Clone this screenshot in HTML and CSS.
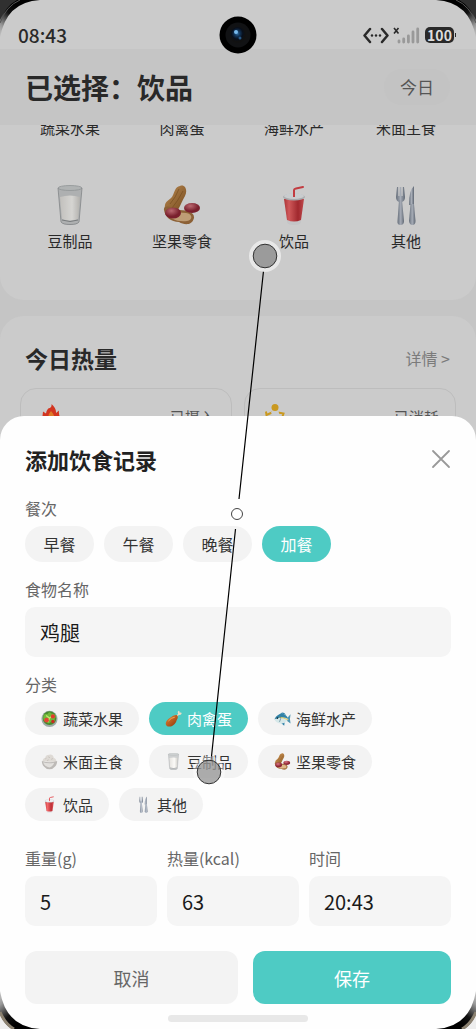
FILE: index.html
```html
<!DOCTYPE html>
<html lang="zh-CN">
<head>
    <meta charset="UTF-8">
    <meta name="viewport" content="width=device-width, initial-scale=1.0">
    <title>饮食记录</title>
    <link rel="stylesheet" href="styles.css">
</head>
<body>
    <!-- food icons -->
    <svg class="defs" width="0" height="0" aria-hidden="true">
        <defs>
            <linearGradient id="gMilk" x1="0" x2="1" y2="0"><stop offset="0" stop-color="#e4e2de"/><stop offset=".6" stop-color="#fbfaf7"/><stop offset="1" stop-color="#d3d1cc"/></linearGradient>
            <linearGradient id="gCup" x1="0" x2="1" y2="0"><stop offset="0" stop-color="#c93d40"/><stop offset=".25" stop-color="#f4686a"/><stop offset=".7" stop-color="#bd3036"/><stop offset="1" stop-color="#e2565a"/></linearGradient>
            <linearGradient id="gShell" x1="0" x2="1" y2="1"><stop offset="0" stop-color="#d9a261"/><stop offset="1" stop-color="#8b5722"/></linearGradient>
            <linearGradient id="gSteel" x1="0" x2="1" y2="0"><stop offset="0" stop-color="#76808e"/><stop offset=".5" stop-color="#c3cad6"/><stop offset="1" stop-color="#6f7987"/></linearGradient>
            <radialGradient id="gNut" cx=".4" cy=".3"><stop offset="0" stop-color="#dc7b84"/><stop offset="1" stop-color="#8f2635"/></radialGradient>
            <linearGradient id="gLeg" x1="0" x2="1" y2="1"><stop offset="0" stop-color="#e98a3a"/><stop offset="1" stop-color="#8a3208"/></linearGradient>
            <radialGradient id="gLens" cx=".45" cy=".4"><stop offset="0" stop-color="#2f70a8"/><stop offset=".35" stop-color="#123458"/><stop offset=".7" stop-color="#080f1c"/><stop offset="1" stop-color="#111"/></radialGradient>
        </defs>
        <symbol id="milk" viewBox="0 0 40 40">
            <path d="M8 3L11 37Q12 40 20 40T29 37L32 3Z" fill="#c4c7c8" opacity=".8"/>
            <path d="M10 12Q20 9 30 12L28 34Q20 37 12 34Z" fill="url(#gMilk)"/>
            <ellipse cx="20" cy="3" rx="12" ry="2.500" fill="#cfd2d3" stroke="#aaaeb0" stroke-width=".8"/>
            <path d="M8 3L11 37Q13 39.500 20 39.500T29 37L32 3" fill="none" stroke="#999d9f" stroke-width=".8"/>
            <path d="M12 35Q20 38 28 35" fill="none" stroke="#8c9092"/>
        </symbol>
        <symbol id="nuts" viewBox="0 0 40 40">
            <path d="M18 1C23-1 26 5 23 11C20 16 19 19 17 23C13 30 1 28 3 20C4 15 9 15 11 10C13 6 13 2 18 1Z" fill="url(#gShell)"/>
            <path d="M17 4Q14 12 8 19M21 6Q16 16 10 23" fill="none" stroke="#855520" stroke-width=".6"/>
            <path d="M2 25C1 20 9 21 15 25C22 25 33 26 32 33C30 41 22 40 17 37C9 37 3 32 2 25Z" fill="#a57240"/>
            <path d="M5 28C11 26 18 28 24 28C31 29 31 35 25 36C15 37 8 34 5 28Z" fill="#e0b98a"/>
            <ellipse cx="11" cy="28" rx="8" ry="5.500" fill="url(#gNut)"/>
            <ellipse cx="30" cy="23" rx="8" ry="5" fill="url(#gNut)"/>
        </symbol>
        <symbol id="drink" viewBox="0 0 40 40">
            <path d="M20 11V5Q20 4 22 3.500L29 2" fill="none" stroke="#e4474c" stroke-width="2" stroke-linecap="round"/>
            <path d="M10 13L13 37Q13 40 20 40T27 37L30 13Z" fill="#e6e8ea"/>
            <path d="M10 14L13 35Q20 38 27 35L30 14Z" fill="url(#gCup)"/>
            <ellipse cx="20" cy="12" rx="11" ry="3.500" fill="#c5c8cb"/>
            <ellipse cx="20" cy="11" rx="10" ry="3" fill="#edf0f2"/>
            <path d="M20 12V7" stroke="#e4474c" stroke-width="2"/>
        </symbol>
        <symbol id="cutlery" viewBox="0 0 40 40">
            <path d="M11 2L10 12Q10 16 13 17H16Q19 16 19 12L18 2H16.800L16.600 11H15.500L15.200 2H13.800L13.500 11H12.400L12.200 2Z" fill="url(#gSteel)"/>
            <path d="M13 15H16L18 36Q18 40 14.500 40T11.500 36Z" fill="url(#gSteel)"/>
            <path d="M28 1Q23 5 23 20H28Z" fill="url(#gSteel)"/>
            <path d="M24.500 19H28L29.500 36Q29.500 40 26.500 40T23 36Z" fill="url(#gSteel)"/>
        </symbol>
        <symbol id="salad" viewBox="0 0 40 40">
            <circle cx="20" cy="21" r="19" fill="#9eaaa7"/>
            <circle cx="20" cy="19" r="16" fill="#478b2d"/>
            <path d="M5 16Q8 6 15 10Q20 1 25 9Q34 7 35 17Q30 20 33 26Q27 31 23 28Q17 35 13 27Q5 28 5 16Z" fill="#70b83b"/>
            <path d="M12 13L20 19L29 12M20 19L16 29" fill="none" stroke="#c2e46f" stroke-width="3"/>
            <circle cx="28" cy="15" r="5" fill="#df3b2d"/><circle cx="13" cy="24" r="5.500" fill="#e44434"/><circle cx="28" cy="27" r="4" fill="#c92d23"/>
        </symbol>
        <symbol id="meat" viewBox="0 0 40 40">
            <path d="M23 17L31 9Q28 4 32 2Q35 2 34 6Q40 5 39 9Q37 13 33 11L26 19Z" fill="#ecdcc4"/>
            <path d="M28 12C33 17 28 22 26 28C21 38 11 41 5 38C-2 33 3 23 12 18Q21 10 28 12Z" fill="url(#gLeg)"/>
            <path d="M8 26Q14 18 23 17" fill="none" stroke="#f3b261" stroke-width="2"/>
        </symbol>
        <symbol id="fish" viewBox="0 0 40 40">
            <path d="M13 11Q20 1 28 11ZM16 30L24 37L25 29Z" fill="#2d80a7"/>
            <path d="M30 20L39 10Q36 21 39 32L30 25Z" fill="#4f96b2"/>
            <path d="M1 22Q8 8 21 9Q29 11 34 22Q26 33 15 32Q5 31 1 22Z" fill="#d6e8e9"/>
            <path d="M1 22Q8 8 21 9Q29 11 34 21Q19 14 1 22Z" fill="#3182a7"/>
            <path d="M13 17Q23 18 33 23" fill="none" stroke="#e5c649" stroke-width="2"/>
            <path d="M14 13Q18 20 13 28" fill="none" stroke="#4c7889" stroke-width="1.500"/>
            <circle cx="8" cy="19" r="2" fill="#142f3b"/>
        </symbol>
        <symbol id="rice" viewBox="0 0 40 40">
            <path d="M4 20Q3 13 10 11Q11 4 19 4Q28 2 30 11Q37 14 36 21Z" fill="#dedad5"/>
            <path d="M10 14L13 12M17 9L21 11M24 15L28 13M14 18L18 16" stroke="#bbb5ae" stroke-width="1.500"/>
            <path d="M2 19Q20 25 38 19Q38 30 29 35Q28 38 20 38T11 35Q2 30 2 19Z" fill="#bdbab7"/>
            <path d="M5 22Q17 26 31 23Q29 31 20 34Q8 32 5 22Z" fill="#e2e0dd"/>
        </symbol>
        <symbol id="fire" viewBox="0 0 40 40">
            <path d="M21 0Q31 9 30 18L36 13Q35 20 38 26Q40 40 20 40Q1 39 3 24L4 15L10 19Q12 8 18 8Q22 5 21 0Z" fill="#e93b24"/>
            <path d="M20 14Q27 22 27 28Q29 39 20 39Q9 39 11 27L14 28Q14 20 20 14Z" fill="#f5892c"/>
        </symbol>
        <symbol id="runner" viewBox="0 0 40 40">
            <path d="M14 17L3 22L2 15M26 17L37 19L34 28M22 30L29 39M20 30L10 37" fill="none" stroke="#e0aa24" stroke-width="4"/>
            <path d="M12 16L27 14L30 28L18 33Z" fill="#e2e5e8"/>
            <circle cx="20" cy="7" r="7" fill="#e0aa24"/>
        </symbol>
    </svg>

    <div class="screen">
        <div class="status-bar">
            <span class="clock">08:43</span>
            <svg class="camera" viewBox="0 0 38 38">
                <circle cx="19" cy="19" r="18.500" fill="#000"/>
                <circle cx="19" cy="19" r="12.500" fill="#111214"/>
                <circle cx="19" cy="19" r="8" fill="url(#gLens)"/>
                <circle cx="17" cy="16" r="2" fill="#78b9eb"/>
                <circle cx="21" cy="22" r="1.500" fill="#275887"/>
            </svg>
            <div class="status-icons">
                <svg width="58" height="18" viewBox="0 0 58 18">
                    <path d="M7 3L1.500 9.500L7 16M19 3L24.500 9.500L19 16" fill="none" stroke="#292929" stroke-width="2.500" stroke-linejoin="round" stroke-linecap="round"/>
                    <circle cx="9" cy="9.500" r="1.200" fill="#292929"/><circle cx="13" cy="9.500" r="1.200" fill="#292929"/><circle cx="17" cy="9.500" r="1.200" fill="#292929"/>
                    <path d="M31 2L35.500 7.500M35.500 2L31 7.500" stroke="#292929" stroke-width="1.600"/>
                    <path d="M36 15V16M40.700 13V16M45.400 10V16M50 6V16M54.700 3V16" stroke="#999" stroke-width="2.800" stroke-linecap="round"/>
                </svg>
                <span class="battery">100</span>
            </div>
        </div>

        <header class="header">
            <h1>已选择：饮品</h1>
            <button type="button" class="today">今日</button>
        </header>

        <section class="foods">
            <div class="food-row food-row-first">
                <span>蔬菜水果</span>
                <span>肉禽蛋</span>
                <span>海鲜水产</span>
                <span>米面主食</span>
            </div>
            <div class="food-row">
                <div class="food"><svg><use href="#milk"/></svg><span>豆制品</span></div>
                <div class="food"><svg><use href="#nuts"/></svg><span>坚果零食</span></div>
                <div class="food"><svg><use href="#drink"/></svg><span>饮品</span></div>
                <div class="food"><svg><use href="#cutlery"/></svg><span>其他</span></div>
            </div>
        </section>

        <section class="calories">
            <div class="calories-head">
                <h2>今日热量</h2>
                <a href="#">详情 &gt;</a>
            </div>
            <div class="cards">
                <div class="card"><svg><use href="#fire"/></svg><span>已摄入</span></div>
                <div class="card"><svg><use href="#runner"/></svg><span>已消耗</span></div>
            </div>
        </section>

        <form class="sheet">
            <div class="sheet-head">
                <h2>添加饮食记录</h2>
                <button type="button" class="close" aria-label="关闭">
                    <svg width="20" height="20" viewBox="0 0 20 20"><path d="M2 2L18 18M18 2L2 18" stroke="#999" stroke-width="1.800" stroke-linecap="round"/></svg>
                </button>
            </div>

            <div class="field">
                <span class="label">餐次</span>
                <div class="chips">
                    <button type="button" class="chip">早餐</button>
                    <button type="button" class="chip">午餐</button>
                    <button type="button" class="chip">晚餐</button>
                    <button type="button" class="chip active">加餐</button>
                </div>
            </div>

            <div class="field">
                <label class="label" for="name">食物名称</label>
                <input type="text" id="name" name="name" value="鸡腿">
            </div>

            <div class="field">
                <span class="label">分类</span>
                <div class="chips">
                    <button type="button" class="chip small"><svg><use href="#salad"/></svg>蔬菜水果</button>
                    <button type="button" class="chip small active"><svg><use href="#meat"/></svg>肉禽蛋</button>
                    <button type="button" class="chip small"><svg><use href="#fish"/></svg>海鲜水产</button>
                    <button type="button" class="chip small"><svg><use href="#rice"/></svg>米面主食</button>
                    <button type="button" class="chip small"><svg><use href="#milk"/></svg>豆制品</button>
                    <button type="button" class="chip small"><svg><use href="#nuts"/></svg>坚果零食</button>
                    <button type="button" class="chip small"><svg><use href="#drink"/></svg>饮品</button>
                    <button type="button" class="chip small"><svg><use href="#cutlery"/></svg>其他</button>
                </div>
            </div>

            <div class="numbers">
                <div>
                    <label class="label" for="weight">重量(g)</label>
                    <input type="text" id="weight" name="weight" inputmode="numeric" value="5">
                </div>
                <div>
                    <label class="label" for="kcal">热量(kcal)</label>
                    <input type="text" id="kcal" name="kcal" inputmode="numeric" value="63">
                </div>
                <div>
                    <label class="label" for="time">时间</label>
                    <input type="text" id="time" name="time" value="20:43">
                </div>
            </div>

            <div class="actions">
                <button type="button" class="cancel">取消</button>
                <button type="submit" class="save">保存</button>
            </div>
            <div class="home-bar"></div>
        </form>

        <!-- swipe trace -->
        <svg class="trace" width="476" height="1029" viewBox="0 0 476 1029" aria-hidden="true">
            <path d="M263.500 271L239 499M235.500 529L211 761" stroke="#000" stroke-width="1.200"/>
            <circle cx="265" cy="256" r="14" fill="none" stroke="#e8e8e8" stroke-width="4"/>
            <circle cx="265" cy="256" r="11.800" fill="#9b9b9b" stroke="#333"/>
            <circle cx="237" cy="514" r="5.500" fill="#fff" stroke="#444"/>
            <circle cx="209" cy="772" r="14" fill="none" stroke="#fff" stroke-width="4" opacity=".4"/>
            <circle cx="209" cy="772" r="11.800" fill="#999" fill-opacity=".8" stroke="#333"/>
        </svg>
    </div>

    <!-- phone frame corners -->
    <svg class="corner top-left" viewBox="0 0 40 40"><use href="#cornerTop"/></svg>
    <svg class="corner top-right" viewBox="0 0 40 40"><use href="#cornerTop"/></svg>
    <svg class="corner bottom-left" viewBox="0 0 40 40"><use href="#cornerBottom"/></svg>
    <svg class="corner bottom-right" viewBox="0 0 40 40"><use href="#cornerBottom"/></svg>
    <svg class="defs" width="0" height="0" aria-hidden="true">
        <defs>
            <linearGradient id="gEdge" x1="0" y1="1" x2=".6" y2=".3"><stop offset="0" stop-color="#cbcbcb"/><stop offset=".3" stop-color="#999"/><stop offset=".7" stop-color="#111"/><stop offset="1" stop-color="#000"/></linearGradient>
        </defs>
        <symbol id="cornerTop" viewBox="0 0 40 40">
            <path d="M0 0H40Q6 2 0 38Z" fill="url(#gEdge)"/>
            <path d="M0 0H17Q6 6 0 20Z" fill="#303030"/>
            <path d="M20 0Q6 6 0 23" fill="none" stroke="#555"/>
        </symbol>
        <symbol id="cornerBottom" viewBox="0 0 40 40">
            <path d="M0 0H40Q6 2 0 38Z" fill="url(#gEdge)"/>
            <path d="M0 0H12Q4 5 0 15Z" fill="#eee"/>
            <path d="M14 0Q5 5 0 17" fill="none" stroke="#8c8271" stroke-width="3"/>
        </symbol>
    </svg>
</body>
</html>
```

FILE: styles.css
```css
* {
    box-sizing: border-box;
}
body {
    margin: 0;
    font-family: "Noto Sans CJK SC", sans-serif;
    color: #222;
    position: relative;
}
h1, h2 {
    margin: 0;
}
button, input {
    font-family: inherit;
    border: none;
}
.defs {
    position: absolute;
}
.screen {
    position: relative;
    display: flex;
    flex-direction: column;
    min-height: 100vh;
    overflow: hidden;
    background-color: #c5c5c5;
}

/* status bar */
.status-bar {
    position: relative;
    display: flex;
    justify-content: space-between;
    align-items: center;
    height: 49px;
    padding: 20px 20px 0 18px;
    background-color: #cbcbcb;
}
.clock {
    font-size: 19px;
    font-weight: 500;
    line-height: 28px;
    color: #292929;
}
.camera {
    position: absolute;
    top: 16px;
    left: 50%;
    width: 38px;
    height: 38px;
    margin-left: -19px;
    z-index: 1;
}
.status-icons {
    display: flex;
    align-items: center;
    gap: 4px;
}
.battery {
    position: relative;
    width: 29px;
    margin-right: 2px;
    border-radius: 5px;
    background-color: #292929;
    color: #ddd;
    font-size: 14px;
    font-weight: 700;
    line-height: 16px;
    text-align: center;
}
.battery::after {
    content: "";
    position: absolute;
    top: 6px;
    right: -2px;
    width: 1px;
    height: 4px;
    background-color: #292929;
}

/* page behind the sheet */
.header {
    position: relative;
    display: flex;
    justify-content: space-between;
    align-items: center;
    height: 76px;
    padding: 0 26px 0 25px;
    background-color: #c5c5c5;
}
.camera,
.header {
    z-index: 1;
}
.status-bar {
    z-index: 2;
}
.header h1 {
    font-size: 28px;
    line-height: 38px;
    color: #292929;
}
.today {
    padding: 0 16px;
    border-radius: 18px;
    background-color: #c3c3c3;
    color: #555;
    font-size: 17px;
    line-height: 36px;
}
.foods {
    margin-top: -8px;
    padding: 0 14px 48px;
    border-radius: 0 0 24px 24px;
    background-color: #cbcbcb;
}
.food-row {
    display: grid;
    grid-template-columns: repeat(4, 1fr);
    font-size: 15px;
    line-height: 22px;
    text-align: center;
    color: #292929;
}
.food-row-first {
    margin-bottom: 46px;
}
.food {
    display: flex;
    flex-direction: column;
    align-items: center;
    gap: 5px;
}
.food svg {
    width: 40px;
    height: 40px;
    filter: brightness(0.85);
}
.calories {
    flex: 1;
    margin-top: 16px;
    padding: 26px 20px;
    border-radius: 24px 24px 0 0;
    background-color: #cbcbcb;
}
.calories-head {
    display: flex;
    justify-content: space-between;
    align-items: center;
    padding: 0 6px 0 5px;
    margin-bottom: 14px;
}
.calories-head h2 {
    font-size: 23px;
    line-height: 32px;
    color: #292929;
}
.calories-head a {
    color: #7b7b7b;
    font-size: 16px;
    text-decoration: none;
}
.cards {
    display: grid;
    grid-template-columns: 1fr 1fr;
    gap: 12px;
}
.card {
    display: flex;
    justify-content: space-between;
    height: 120px;
    padding: 15px 16px;
    border: 1px solid #bdbdbd;
    border-radius: 16px;
    color: #555;
    font-size: 15px;
    line-height: 26px;
}
.card svg {
    width: 20px;
    height: 20px;
    margin-left: 4px;
    filter: brightness(0.9);
}

/* bottom sheet */
.sheet {
    position: absolute;
    left: 0;
    right: 0;
    bottom: 0;
    z-index: 3;
    padding: 28px 25px 7px;
    border-radius: 24px 24px 0 0;
    background-color: #fefefe;
}
.sheet-head {
    display: flex;
    justify-content: space-between;
    align-items: center;
    margin-bottom: 22px;
}
.sheet-head h2 {
    font-size: 22px;
    line-height: 30px;
}
.close {
    display: flex;
    padding: 0;
    background: none;
}
.field {
    margin-bottom: 15px;
}
.label {
    display: block;
    margin-bottom: 6px;
    color: #666;
    font-size: 16px;
    line-height: 24px;
}
.chips {
    display: flex;
    flex-wrap: wrap;
    gap: 10px;
}
.chip {
    display: flex;
    align-items: center;
    justify-content: center;
    gap: 5px;
    min-width: 69px;
    height: 36px;
    padding: 0 16px;
    border-radius: 18px;
    background-color: #f3f3f3;
    color: #333;
    font-size: 16px;
}
.chip.small {
    height: 33px;
    font-size: 15px;
}
.chip.active {
    background-color: #4ecbc4;
    color: #fff;
}
.chip svg {
    width: 17px;
    height: 17px;
}
.sheet input {
    display: block;
    width: 100%;
    height: 50px;
    padding: 0 15px;
    border-radius: 10px;
    background-color: #f5f5f5;
    color: #1a1a1a;
    font-size: 20px;
}
.numbers {
    display: grid;
    grid-template-columns: 13fr 13fr 14fr;
    gap: 10px;
    margin: 25px 0;
}
.actions {
    display: grid;
    grid-template-columns: 14fr 13fr;
    gap: 15px;
}
.actions button {
    height: 53px;
    border-radius: 12px;
    font-size: 18px;
}
.cancel {
    background-color: #f3f3f3;
    color: #666;
}
.save {
    background-color: #4ecbc4;
    color: #fff;
}
.home-bar {
    width: 33%;
    height: 7px;
    margin: 11px auto 0;
    border-radius: 4px;
    background-color: #e8e8e8;
}
.trace {
    position: absolute;
    top: 0;
    left: 0;
    z-index: 4;
    pointer-events: none;
}

/* frame corners */
.corner {
    position: absolute;
    z-index: 5;
    width: 40px;
    height: 40px;
}
.top-left {
    top: 0;
    left: 0;
}
.top-right {
    top: 0;
    right: 0;
    transform: scaleX(-1);
}
.bottom-left {
    bottom: 0;
    left: 0;
    transform: scaleY(-1);
}
.bottom-right {
    bottom: 0;
    right: 0;
    transform: scale(-1);
}
```
